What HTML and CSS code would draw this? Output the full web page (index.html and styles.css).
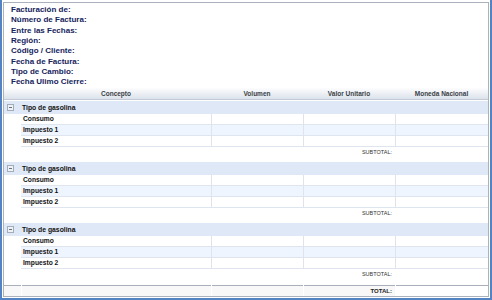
FILE: index.html
```html
<!DOCTYPE html>
<html lang="es">
<head>
<meta charset="utf-8">
<title>Facturación</title>
<link rel="stylesheet" href="styles.css">
</head>
<body>
<div class="frame">
  <div class="panel">
    <div class="info">
      <div class="lbl">Facturación de:</div>
      <div class="lbl">Número de Factura:</div>
      <div class="lbl">Entre las Fechas:</div>
      <div class="lbl">Región:</div>
      <div class="lbl">Código / Cliente:</div>
      <div class="lbl">Fecha de Factura:</div>
      <div class="lbl">Tipo de Cambio:</div>
      <div class="lbl">Fecha Ulimo Cierre:</div>
    </div>

    <div class="row head">
      <div class="hc span2">Concepto</div>
      <div class="hc">Volumen</div>
      <div class="hc">Valor Unitario</div>
      <div class="hc">Moneda Nacional</div>
    </div>

    <div class="group">
      <div class="ghead"><span class="tog"></span><span class="gname">Tipo de gasolina</span></div>
      <div class="row data"><div class="c0"></div><div class="c1">Consumo</div><div class="cn"></div><div class="cn"></div><div class="cn"></div></div>
      <div class="row data alt"><div class="c0"></div><div class="c1">Impuesto 1</div><div class="cn"></div><div class="cn"></div><div class="cn"></div></div>
      <div class="row data"><div class="c0"></div><div class="c1">Impuesto 2</div><div class="cn"></div><div class="cn"></div><div class="cn"></div></div>
      <div class="row sub"><div></div><div></div><div></div><div class="subl">SUBTOTAL:</div><div></div></div>
    </div>

    <div class="group">
      <div class="ghead"><span class="tog"></span><span class="gname">Tipo de gasolina</span></div>
      <div class="row data"><div class="c0"></div><div class="c1">Consumo</div><div class="cn"></div><div class="cn"></div><div class="cn"></div></div>
      <div class="row data alt"><div class="c0"></div><div class="c1">Impuesto 1</div><div class="cn"></div><div class="cn"></div><div class="cn"></div></div>
      <div class="row data"><div class="c0"></div><div class="c1">Impuesto 2</div><div class="cn"></div><div class="cn"></div><div class="cn"></div></div>
      <div class="row sub"><div></div><div></div><div></div><div class="subl">SUBTOTAL:</div><div></div></div>
    </div>

    <div class="group">
      <div class="ghead"><span class="tog"></span><span class="gname">Tipo de gasolina</span></div>
      <div class="row data"><div class="c0"></div><div class="c1">Consumo</div><div class="cn"></div><div class="cn"></div><div class="cn"></div></div>
      <div class="row data alt"><div class="c0"></div><div class="c1">Impuesto 1</div><div class="cn"></div><div class="cn"></div><div class="cn"></div></div>
      <div class="row data"><div class="c0"></div><div class="c1">Impuesto 2</div><div class="cn"></div><div class="cn"></div><div class="cn"></div></div>
      <div class="row sub"><div></div><div></div><div></div><div class="subl">SUBTOTAL:</div><div></div></div>
    </div>

    <div class="row total">
      <div class="tc"></div><div class="tc"></div><div class="tc"></div><div class="tc totl">TOTAL:</div><div class="tc last"></div>
    </div>
  </div>
</div>
</body>
</html>
```

FILE: styles.css
```css
* { box-sizing: border-box; }
html, body {
  margin: 0;
  padding: 0;
  background: #ffffff;
}
body {
  font-family: "Liberation Sans", Arial, sans-serif;
  width: 492px;
  height: 300px;
  overflow: hidden;
}
.frame {
  width: 492px;
  height: 300px;
  border-left: 2px solid #5383c2;
  border-right: 2px solid #5383c2;
  border-bottom: 2px solid #5383c2;
  padding: 2px 1px 1px 1px;
}
.panel {
  height: 295px;
  border: 1px solid #aab2be;
  display: flex;
  flex-direction: column;
}
.info {
  padding: 2px 0 0 7px;
}
.lbl {
  font-size: 8px;
  font-weight: bold;
  line-height: 10.35px;
  height: 10.35px;
  color: #16245c;
  white-space: nowrap;
}
.row {
  display: grid;
  grid-template-columns: 17px 190px 92px 92px 93px;
}
.head {
  height: 12px;
  background: linear-gradient(#fdfdfe, #dbe2ea);
  border-bottom: 1px solid #c3cad5;
  margin-bottom: 1px;
}
.hc {
  font-size: 6.5px;
  font-weight: bold;
  color: #3a3f47;
  text-align: center;
  line-height: 11px;
  white-space: nowrap;
}
.span2 { grid-column: 1 / 3; padding-left: 17px; }
.group {
  margin-bottom: 4px;
}
.ghead {
  height: 13px;
  background: #dfe8f6;
  display: flex;
  align-items: center;
}
.tog {
  width: 7px;
  height: 7px;
  margin-left: 3px;
  margin-right: 8px;
  border: 1px solid #a3acb9;
  background: #eef1f5;
  position: relative;
}
.tog::after {
  content: "";
  position: absolute;
  left: 1px;
  top: 2px;
  width: 3px;
  height: 1px;
  background: #6a7280;
}
.gname {
  font-size: 6.8px;
  font-weight: bold;
  color: #111;
  white-space: nowrap;
}
.data > div {
  height: 11px;
}
.data .c1, .data .cn {
  border-bottom: 1px solid #dfe5ee;
}
.data .cn {
  border-left: 1px solid #dfe3ea;
}
.data.alt .c1, .data.alt .cn {
  background: #eef5fe;
}
.c1 {
  font-size: 6.7px;
  font-weight: bold;
  color: #111;
  line-height: 10px;
  padding-left: 2px;
  white-space: nowrap;
}
.sub {
  height: 11px;
}
.subl {
  font-size: 5.5px;
  color: #333;
  text-align: right;
  padding-right: 3px;
  line-height: 10px;
  white-space: nowrap;
}
.total {
  margin-top: auto;
  height: 11px;
}
.tc {
  border-top: 1px solid #a9b0bb;
  background: #f8f8f8;
  height: 11px;
}
.tc + .tc {
  margin-left: 1px;
}
.tc.last {
  background: #ffffff;
}
.totl {
  font-size: 6px;
  font-weight: bold;
  color: #222;
  text-align: right;
  padding-right: 3px;
  line-height: 10px;
  white-space: nowrap;
}
```
